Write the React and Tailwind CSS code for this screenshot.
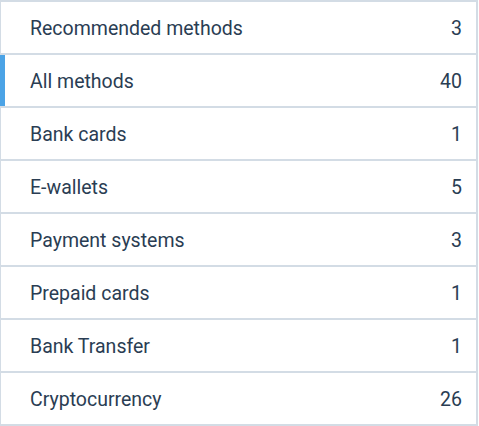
import React from "react";

const rows = [
  ["Recommended methods", 3],
  ["All methods", 40],
  ["Bank cards", 1],
  ["E-wallets", 5],
  ["Payment systems", 3],
  ["Prepaid cards", 1],
  ["Bank Transfer", 1],
  ["Cryptocurrency", 26],
];

export default function App() {
  return (
    <div className="w-[479px] h-[426px] bg-white" style={{ fontFamily: "Roboto, sans-serif" }}>
      <div className="w-[478px] border-t-2 border-l border-r-2 border-[#d3dce5]">
        {rows.map(([label, n], i) => (
          <div
            key={label}
            className="relative flex items-center justify-between h-[53px] border-b-2 border-[#d3dce5] pt-[2px] pl-[29px] pr-[14px] text-[19.5px] text-[#2a3d53]"
          >
            {i === 1 && <div className="absolute left-[-1px] top-0 bottom-0 w-[5px] bg-[#4ba3e6]" />}
            <span>{label}</span>
            <span>{n}</span>
          </div>
        ))}
      </div>
    </div>
  );
}
